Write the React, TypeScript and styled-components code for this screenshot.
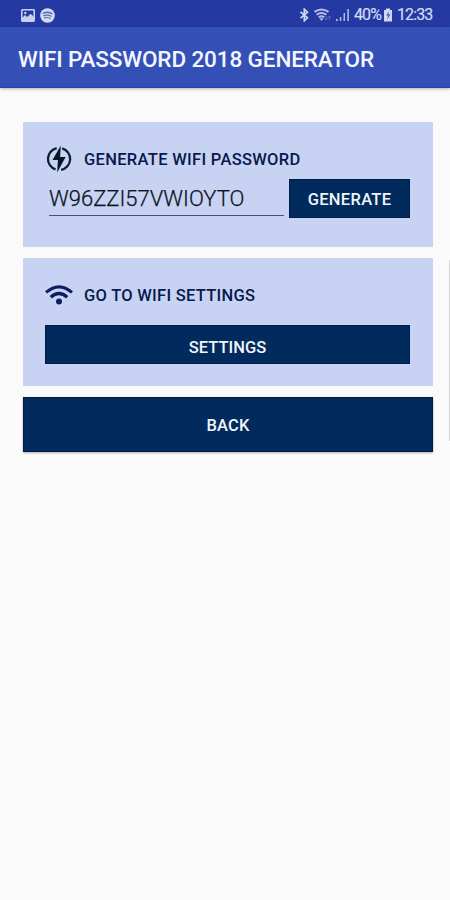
import React from "react";
import styled, { createGlobalStyle } from "styled-components";

const GlobalStyle = createGlobalStyle`
  * { box-sizing: border-box; }
  body { margin: 0; background: #fafafa; font-family: Roboto, "Liberation Sans", sans-serif; }
`;

const Screen = styled.div`
  position: relative;
  width: 450px;
  height: 900px;
  overflow: hidden;
  background: #fafafa;
`;

const StatusBar = styled.header`
  display: flex;
  justify-content: space-between;
  align-items: center;
  height: 27px;
  padding: 3px 17px 0 21px;
  background: #2439a2;
  color: #d3d9f4;
`;

const StatusGroup = styled.div<{ $gap: number }>`
  display: flex;
  align-items: center;
  gap: ${(p) => p.$gap}px;
  svg { display: block; flex: none; }
`;

const StatusText = styled.span<{ $width: number }>`
  width: ${(p) => p.$width}px;
  font-size: 16px;
  line-height: 20px;
  letter-spacing: -0.9px;
  white-space: nowrap;
  -webkit-text-stroke: 0.2px currentColor;
`;

const AppBar = styled.div`
  display: flex;
  align-items: center;
  height: 61px;
  padding: 4px 18px 0;
  background: #3450b7;
  border-bottom: 1px solid #2544ae;
  box-shadow: 0 1px 3px rgba(0, 0, 0, 0.3);
`;

const Title = styled.h1`
  margin: 0;
  color: #f4f6ff;
  font-size: 22.5px;
  font-weight: 500;
  line-height: 28px;
  letter-spacing: -0.12px;
  white-space: nowrap;
`;

const Content = styled.main`
  display: flex;
  flex-direction: column;
  padding: 34px 17px 0 23px;
`;

const Card = styled.section<{ $height: number; $gap: number }>`
  height: ${(p) => p.$height}px;
  margin-bottom: ${(p) => p.$gap}px;
  padding: 23px 23px 0 22px;
  background: #c8d3f3;
`;

const CardHeading = styled.div`
  display: flex;
  align-items: center;
  gap: 11px;
  height: 28px;
  svg { display: block; flex: none; }
`;

const CardTitle = styled.h2<{ $spacing: number }>`
  margin: 2px 0 0;
  color: #08194c;
  font-size: 16.5px;
  font-weight: 500;
  line-height: 20px;
  letter-spacing: ${(p) => p.$spacing}px;
  white-space: nowrap;
`;

const PasswordRow = styled.div`
  display: flex;
  gap: 5px;
  margin-top: 6px;
`;

const PasswordField = styled.div`
  width: 235px;
  height: 37px;
  margin-left: 4px;
  padding-top: 6px;
  border-bottom: 1px solid #46516f;
  color: #0c141f;
  font-size: 22px;
  font-weight: 300;
  line-height: 28px;
  white-space: nowrap;
  -webkit-text-stroke: 0.25px currentColor;
`;

const Button = styled.button<{ $width?: number; $height: number; $top?: number; $shift?: number; $spacing?: number }>`
  display: flex;
  align-items: center;
  justify-content: center;
  width: ${(p) => (p.$width ? `${p.$width}px` : "100%")};
  height: ${(p) => p.$height}px;
  margin: ${(p) => p.$top ?? 0}px 0 0;
  padding: ${(p) => p.$shift ?? 0}px 0 0;
  border: 1px solid #001a4b;
  border-radius: 0;
  background: #002b5c;
  color: #f1f4fa;
  font-family: inherit;
  font-size: 16.5px;
  font-weight: 500;
  line-height: 20px;
  letter-spacing: ${(p) => p.$spacing ?? 0}px;
`;

const BackButton = styled(Button)`
  box-shadow: 0 1px 2px rgba(0, 0, 0, 0.3);
`;

const ScrollThumb = styled.div`
  position: absolute;
  top: 260px;
  right: 0;
  width: 1px;
  height: 181px;
  background: #d5d5d7;
`;

const PictureIcon = () => (
  <svg width="14" height="13" viewBox="0 0 14 13">
    <rect x="0.8" y="0.8" width="12.4" height="11.4" rx="0.6" fill="#2439a2" stroke="#c8d0f0" strokeWidth="1.6" />
    <path d="M1 9l3-3 2.2 2 3.5-3.2L13 8v4H1z" fill="#c8d0f0" />
    <circle cx="4.3" cy="4" r="1.2" fill="#c8d0f0" />
  </svg>
);

const MusicIcon = () => (
  <svg width="15" height="15" viewBox="0 0 15 15">
    <circle cx="7.5" cy="7.5" r="7.3" fill="#d5dbf2" />
    <g fill="none" stroke="#596dba" strokeLinecap="round">
      <path d="M3.2 5.1q4.5-1.7 8.7.6" strokeWidth="1.5" />
      <path d="M3.8 7.6q4-1.3 7.4.6" strokeWidth="1.3" />
      <path d="M4.5 9.9q3.1-.9 5.8.6" strokeWidth="1.1" />
    </g>
  </svg>
);

const BluetoothIcon = () => (
  <svg width="11" height="14" viewBox="0 0 11 14" fill="none" stroke="currentColor" strokeWidth="1.6">
    <path d="M1.5 3.8l7 6-3.2 3V1.2l3.2 3-7 6" />
  </svg>
);

const StatusWifiIcon = () => (
  <svg width="18" height="14" viewBox="0 0 18 14">
    <g fill="none" stroke="#b5c0e8" strokeWidth="2">
      <path d="M.5 3.9q7-5 14 0" />
      <path d="M2.7 6.7q4.8-3.4 9.6 0" />
      <path d="M4.8 9.3q2.7-2 5.4 0" />
    </g>
    <path d="M5.4 10.2h4.2L7.5 13z" fill="#b5c0e8" />
    <path d="M12 8v4m-1.4-1.4L12 12l1.4-1.4M15.4 12V8M14 9.4L15.4 8l1.4 1.4" fill="none" stroke="#6072bf" strokeWidth=".9" />
  </svg>
);

const SignalIcon = () => (
  <svg width="14" height="14" viewBox="0 0 14 14" fill="#aeb9e6">
    <rect x="0" y="11" width="1.7" height="2" />
    <rect x="3.8" y="9" width="1.5" height="4" />
    <rect x="7.5" y="5" width="1.5" height="8" />
    <rect x="11.3" y="1" width="1.6" height="12" />
  </svg>
);

const BatteryIcon = () => (
  <svg width="10" height="14" viewBox="0 0 10 14">
    <path d="M3 .5h4V2h2v11.5H1V2h2z" fill="#d0d7f3" />
    <path d="M6.2 3L3.2 7.5h2L4.2 11.5 7.4 6.5H5.2z" fill="#3d50ac" />
  </svg>
);

const BoltIcon = () => (
  <svg width="28" height="28" viewBox="0 0 28 28">
    <g fill="none" stroke="#0a1e35" strokeWidth="2.3">
      <path d="M11.7 3.2A11 11 0 0 0 10.5 24.4" />
      <path d="M17.2 3.4A11 11 0 0 1 16.1 24.8" />
    </g>
    <path d="M15.8.4L7.5 15h5.4L12.2 27.6 20.6 12h-5.5z" fill="#071526" />
  </svg>
);

const WifiIcon = () => (
  <svg width="28" height="28" viewBox="0 0 28 28" fill="none" stroke="#0c1d62">
    <path d="M1 11.4Q14 .2 27 11.4" strokeWidth="3.2" />
    <path d="M5.8 16.2Q14 8.8 22.2 16.2" strokeWidth="3.2" />
    <circle cx="14" cy="20.5" r="3" fill="#0c1d62" stroke="none" />
  </svg>
);

export default function App() {
  return (
    <>
      <GlobalStyle />
      <Screen>
        <StatusBar>
          <StatusGroup $gap={5}>
            <PictureIcon />
            <MusicIcon />
          </StatusGroup>
          <StatusGroup $gap={4}>
            <BluetoothIcon />
            <StatusWifiIcon />
            <SignalIcon />
            <StatusText $width={25}>40%</StatusText>
            <BatteryIcon />
            <StatusText $width={36}>12:33</StatusText>
          </StatusGroup>
        </StatusBar>
        <AppBar>
          <Title>WIFI PASSWORD 2018 GENERATOR</Title>
        </AppBar>
        <Content>
          <Card $height={125} $gap={11}>
            <CardHeading>
              <BoltIcon />
              <CardTitle $spacing={0.31}>GENERATE WIFI PASSWORD</CardTitle>
            </CardHeading>
            <PasswordRow>
              <PasswordField>W96ZZI57VWIOYTO</PasswordField>
              <Button $width={121} $height={39} $shift={2} $spacing={0.3}>GENERATE</Button>
            </PasswordRow>
          </Card>
          <Card $height={128} $gap={11}>
            <CardHeading>
              <WifiIcon />
              <CardTitle $spacing={0.28}>GO TO WIFI SETTINGS</CardTitle>
            </CardHeading>
            <Button $height={39} $top={16} $shift={6}>SETTINGS</Button>
          </Card>
          <BackButton $height={55} $shift={2} $spacing={0.2}>BACK</BackButton>
        </Content>
        <ScrollThumb />
      </Screen>
    </>
  );
}
